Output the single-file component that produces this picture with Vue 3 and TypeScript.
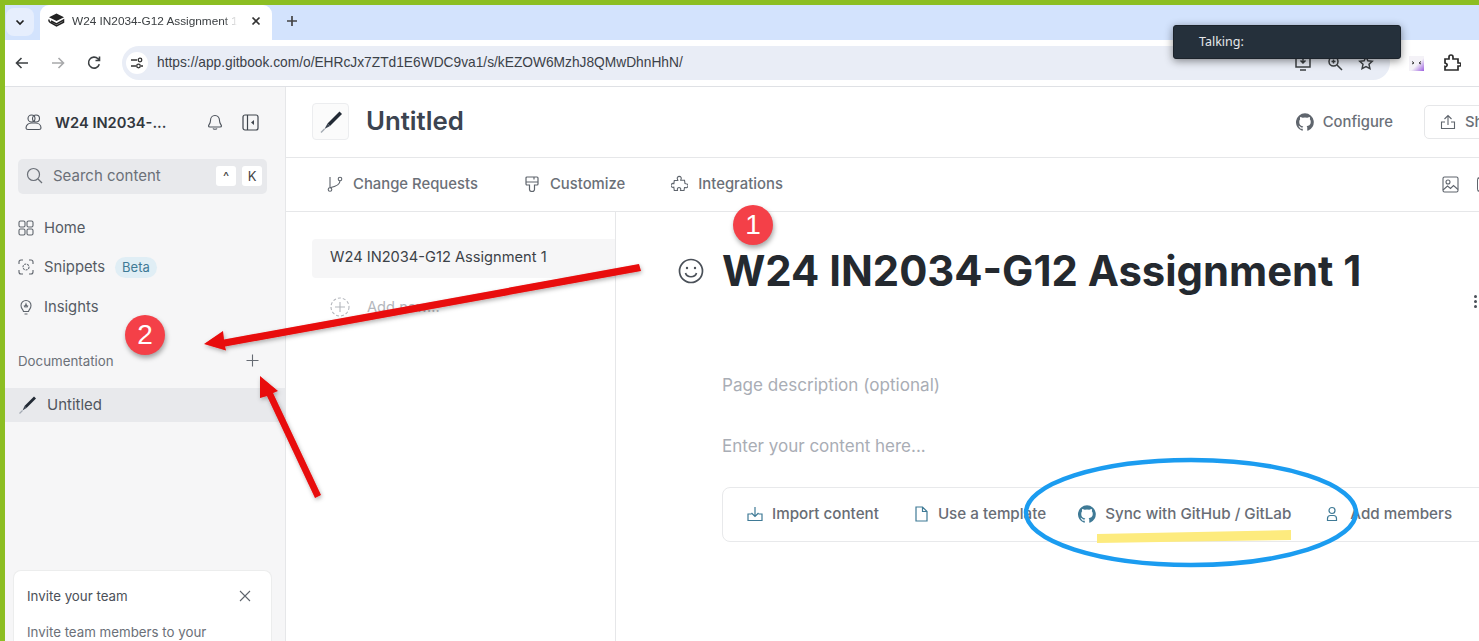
<script setup lang="ts">
const navItems = [
  { label: "Home", icon: "home" },
  { label: "Snippets", icon: "snippets", badge: "Beta" },
  { label: "Insights", icon: "insights" },
];
const tabs = [
  { label: "Change Requests", icon: "branch" },
  { label: "Customize", icon: "brush" },
  { label: "Integrations", icon: "puzzle" },
];
const githubPath =
  "M8 .2a8 8 0 0 0-2.500 15.600c.4.100.5-.2.5-.4v-1.400c-2.200.5-2.700-1-2.700-1-.4-.9-.9-1.200-.9-1.200-.7-.5.1-.5.1-.5.8.1 1.200.8 1.200.8.7 1.200 1.900.9 2.300.7.1-.5.3-.9.5-1.100-1.800-.2-3.600-.9-3.600-4 0-.9.3-1.600.8-2.100-.1-.2-.4-1 .1-2.100 0 0 .7-.2 2.200.8a7.600 7.600 0 0 1 4 0c1.500-1 2.200-.8 2.200-.8.4 1.100.2 1.900.1 2.100.5.6.8 1.300.8 2.100 0 3.100-1.900 3.700-3.700 3.900.3.300.6.700.6 1.500v2.200c0 .2.100.5.600.4A8 8 0 0 0 8 .2z";
</script>

<template>
  <div class="page">
    <header class="tabstrip">
      <div class="tab-menu">
        <svg width="12" height="12" viewBox="0 0 12 12"><path d="M2.500 4.500 6 8l3.500-3.500" fill="none" stroke="#1f1f1f" stroke-width="1.700" /></svg>
      </div>
      <div class="tab">
        <svg width="17" height="15" viewBox="0 0 17 15" class="favicon">
          <path d="M8.500 .5 16 4.300 8.500 8.100 1 4.300z" fill="#222" />
          <path d="M1.200 6.500c-.6 1.500 0 2.300 1 2.900l6.300 3.600 7-3.800V7L8.500 10.800 3 8" fill="none" stroke="#222" stroke-width="1.500" />
        </svg>
        <span class="tab-title">W24 IN2034-G12 Assignment 1</span>
        <svg width="10" height="10" viewBox="0 0 10 10"><path d="M1.500 1.500l7 7m0-7l-7 7" stroke="#333" stroke-width="1.700" /></svg>
      </div>
      <svg class="tab-plus" width="14" height="14" viewBox="0 0 14 14"><path d="M7 2v10M2 7h10" stroke="#444" stroke-width="1.700" /></svg>
    </header>

    <div class="toolbar">
      <svg class="tool" width="16" height="16" viewBox="0 0 16 16"><path d="M14 8H3M7.500 3 2.500 8l5 5" fill="none" stroke="#3c4043" stroke-width="1.600" /></svg>
      <svg class="tool" width="16" height="16" viewBox="0 0 16 16"><path d="M2 8h11M8.500 3l5 5-5 5" fill="none" stroke="#a8a9ab" stroke-width="1.600" /></svg>
      <svg class="tool" width="16" height="16" viewBox="0 0 16 16"><path d="M13.300 9.300A5.500 5.500 0 1 1 12 3.800L13.500 5.500M13.500 1.500v4h-4" fill="none" stroke="#3c4043" stroke-width="1.600" /></svg>
      <div class="urlbar">
        <span class="site-btn">
          <svg width="14" height="14" viewBox="0 0 14 14"><path d="M1 4h6M11 10h2M1 10h5" stroke="#333" stroke-width="1.400" /><circle cx="10" cy="4" r="1.800" fill="none" stroke="#333" stroke-width="1.300" /><circle cx="8.500" cy="10" r="1.800" fill="none" stroke="#333" stroke-width="1.300" /></svg>
        </span>
        <span class="url">https://app.gitbook.com/o/EHRcJx7ZTd1E6WDC9va1/s/kEZOW6MzhJ8QMwDhnHhN/</span>
        <span class="url-icons">
          <svg width="18" height="18" viewBox="0 0 18 18"><path d="M4 3H2v10h14V3h-3M6 16h6M9 2v7M6.500 6.500 9 9l2.500-2.500" fill="none" stroke="#3c4043" stroke-width="1.500" /></svg>
          <svg width="16" height="16" viewBox="0 0 16 16"><circle cx="6.500" cy="6.500" r="4.500" fill="none" stroke="#3c4043" stroke-width="1.500" /><path d="M10 10l5 5M4.500 6.500h4M6.500 4.500v4" stroke="#3c4043" stroke-width="1.500" /></svg>
          <svg width="16" height="16" viewBox="0 0 16 16"><path d="M8 1.800l1.900 4 4.300.5-3.200 3 .9 4.300L8 11.500l-3.900 2.100.9-4.300-3.200-3 4.300-.5z" fill="none" stroke="#3c4043" stroke-width="1.500" /></svg>
        </span>
      </div>
      <div class="ext-icons">
        <span class="ext-avatar">
          <svg width="15" height="15" viewBox="0 0 15 15"><path d="M3 5.500l2 1.500-2 1M12 5.500 10 7l2 1" fill="none" stroke="#333" stroke-width="1" /></svg>
        </span>
        <svg class="tool" width="18" height="18" viewBox="0 0 18 18"><path d="M2 5h4V3a2 2 0 0 1 4 0v2h5v4h1.500a1.500 1.500 0 0 1 0 3H15v4H2v-3.500a1.500 1.500 0 0 0 1-3 1.500 1.500 0 0 0-1-.5z" fill="none" stroke="#2b2b2b" stroke-width="1.700" /></svg>
        <span class="ext-edge"></span>
      </div>
    </div>

    <div class="app">
      <aside class="sidebar">
        <div class="org">
          <svg width="17" height="17" viewBox="0 0 17 17" fill="none" stroke="#4d535c" stroke-width="1.100">
            <circle cx="6.500" cy="4.500" r="3.500" /><circle cx="11" cy="4.500" r="3.500" />
            <path d="M1 14c0-3 2.500-5 5.500-5h4c3 0 5.500 2 5.500 5 0 1-1 1.500-2 1.500H3c-1 0-2-.5-2-1.500z" />
          </svg>
          <span class="org-name">W24 IN2034-...</span>
          <svg class="bell" width="16" height="17" viewBox="0 0 16 17" fill="none" stroke="#4d535c" stroke-width="1.100"><path d="M8 1.500c-3 0-4.500 2.300-4.500 5 0 3-2 4.500-2 5.500 0 .8.500 1 1.500 1h10c1 0 1.500-.2 1.500-1 0-1-2-2.500-2-5.500 0-2.700-1.500-5-4.500-5zM6 14.500c.4 1 3.600 1 4 0" /></svg>
          <svg width="17" height="17" viewBox="0 0 17 17" fill="none" stroke="#3f454d" stroke-width="1.200"><rect x="1" y="1" width="15" height="15" rx="2" /><path d="M5.500 1v15" /><path d="M12 6v5L9 8.500z" fill="#3f454d" stroke="none" /></svg>
        </div>

        <div class="search">
          <svg class="lift" width="17" height="17" viewBox="0 0 17 17" fill="none" stroke="#6b7078" stroke-width="1.200"><circle cx="7.500" cy="7.500" r="6" /><path d="M12 12l4 4" /></svg>
          <span class="search-text">Search content</span>
          <kbd class="key">^</kbd>
          <kbd class="key">K</kbd>
        </div>

        <nav class="nav">
          <div v-for="item in navItems" :key="item.label" class="nav-item">
            <svg v-if="item.icon === 'home'" width="16" height="16" viewBox="0 0 16 16" fill="none" stroke="#5f656d" stroke-width="1.100"><rect x="1" y="1" width="6" height="6" rx="1.500" /><rect x="9" y="1" width="6" height="6" rx="1.500" /><rect x="1" y="9" width="6" height="6" rx="1.500" /><rect x="9" y="9" width="6" height="6" rx="1.500" /></svg>
            <svg v-else-if="item.icon === 'snippets'" width="16" height="16" viewBox="0 0 16 16" fill="none" stroke="#5f656d" stroke-width="1.100"><path d="M1 5V3a2 2 0 0 1 2-2h2M11 1h2a2 2 0 0 1 2 2v2M15 11v2a2 2 0 0 1-2 2h-2M5 15H3a2 2 0 0 1-2-2v-2" /><circle cx="8" cy="8" r="3" stroke-dasharray="2 1" /></svg>
            <svg v-else width="16" height="16" viewBox="0 0 16 16" fill="none" stroke="#5f656d" stroke-width="1.100"><path d="M5.500 12.500C5 10.500 3 9.500 3 6.500a5 5 0 0 1 10 0c0 3-2 4-2.500 6zM6.500 15h3M6 6.500l1 1.500 1-3 1 3 1-1.500" /></svg>
            <span>{{ item.label }}</span>
            <span v-if="item.badge" class="badge">{{ item.badge }}</span>
          </div>
        </nav>

        <div class="section-head">
          <span>Documentation</span>
          <svg width="13" height="13" viewBox="0 0 13 13"><path d="M6.500.5v12M.5 6.500h12" stroke="#666b73" stroke-width="1.100" /></svg>
        </div>
        <div class="space-row">
          <svg width="19" height="19" viewBox="0 0 19 19"><path d="M16 1.500 6.500 11l2 2L18 3.500z" fill="#222a35" /><path d="M6.500 11l-2 4.500 4-2.500z" fill="#3a4350" /><path d="M4.500 15.500l-3 3" stroke="#a4abb3" stroke-width="1.200" /></svg>
          <span>Untitled</span>
        </div>

        <div class="invite">
          <div class="invite-head">
            <span>Invite your team</span>
            <svg width="12" height="12" viewBox="0 0 12 12"><path d="M1 1l10 10m0-10L1 11" stroke="#5f656d" stroke-width="1.100" /></svg>
          </div>
          <p>Invite team members to your</p>
        </div>
      </aside>

      <main class="main">
        <div class="title-bar">
          <span class="space-icon">
            <svg width="24" height="24" viewBox="0 0 24 24"><path d="M20.500 1.500 8.500 13.500l2.500 2.500L23 4z" fill="#222a35" /><path d="M8.500 13.500l-3 5.500 5.500-3z" fill="#3a4350" /><path d="M5.500 19l-3.500 3.500" stroke="#a4abb3" stroke-width="1.400" /></svg>
          </span>
          <h1>Untitled</h1>
          <div class="configure">
            <svg width="18" height="18" viewBox="0 0 16 16"><path :d="githubPath" fill="#5f656d" /></svg>
            <span>Configure</span>
          </div>
          <div class="share">
            <svg width="16" height="16" viewBox="0 0 16 16" fill="none" stroke="#5f656d" stroke-width="1.100"><path d="M8 11V1.500M4.500 5 8 1.500 11.500 5M5 8H1.500v6.500h13V8H11" /></svg>
            <span>Share</span>
          </div>
        </div>

        <div class="tab-bar">
          <div v-for="t in tabs" :key="t.label" class="page-tab">
            <svg v-if="t.icon === 'branch'" width="16" height="16" viewBox="0 0 16 16" fill="none" stroke="#5f656d" stroke-width="1.100"><circle cx="3" cy="13.500" r="1.800" /><circle cx="13" cy="3" r="1.800" /><path d="M3 11.700V1M13 4.800c0 4.500-5 6-10 6.900" /></svg>
            <svg v-else-if="t.icon === 'brush'" width="16" height="16" viewBox="0 0 16 16" fill="none" stroke="#5f656d" stroke-width="1.200"><path d="M3 1h10a1 1 0 0 1 1 1v6a1 1 0 0 1-1 1h-2.500v4.500a2.500 2 0 0 1-5 0V9H3a1 1 0 0 1-1-1V2a1 1 0 0 1 1-1zM2 6h12M10 1v2.500" /></svg>
            <svg v-else width="17" height="17" viewBox="0 0 17 17" fill="none" stroke="#5f656d" stroke-width="1.100"><path d="M6.500 4.300a2 2 0 1 1 3.500 0l-.3 1h3.800l.5 3.200 1 .2a2 2 0 1 1-.8 3.800h-.7l-.5 3H9.500l.2-.9a1.700 1.700 0 1 0-3.300 0l.1.900H3.300l-.5-3.300-.7.200a2 2 0 1 1-.2-4l1 .2.400-3.100h3.500z" /></svg>
            <span>{{ t.label }}</span>
          </div>
          <svg class="image-btn" width="17" height="17" viewBox="0 0 17 17" fill="none" stroke="#5f656d" stroke-width="1.100"><rect x="1" y="1" width="15" height="15" rx="1.500" /><circle cx="6" cy="6" r="2" /><path d="M1 14l4.500-4 3 2.500 3-3 4.500 4" /></svg>
          <span class="edge-icon"></span>
        </div>

        <div class="body">
          <div class="pages">
            <div class="page-row">W24 IN2034-G12 Assignment 1</div>
            <div class="add-row">
              <svg width="20" height="20" viewBox="0 0 20 20" fill="none" stroke="#b4b7bd" stroke-width="1.100"><circle cx="10" cy="10" r="9" stroke-dasharray="3 2" /><path d="M10 5v10M5 10h10" /></svg>
              <span>Add new...</span>
            </div>
          </div>

          <div class="editor">
            <div class="doc-title">
              <svg width="26" height="26" viewBox="0 0 26 26" fill="none" stroke="#4a5058" stroke-width="1.700"><circle cx="13" cy="13" r="11.500" /><path d="M7.500 15c1.500 5 9.500 5 11 0" /><circle cx="9" cy="10" r="1.200" fill="#4a5058" stroke="none" /><circle cx="17" cy="10" r="1.200" fill="#4a5058" stroke="none" /></svg>
              <h2>W24 IN2034-G12 Assignment 1</h2>
            </div>
            <div class="doc-desc">Page description (optional)</div>
            <div class="doc-enter">Enter your content here...</div>
            <div class="actions">
              <div class="action">
                <svg width="16" height="16" viewBox="0 0 16 16" fill="none" stroke="#3f7a96" stroke-width="1.200"><path d="M8 1v9.500M4.500 7 8 10.500 11.500 7M4.500 8H1v6.500h14V8h-3.500" /></svg>
                <span>Import content</span>
              </div>
              <div class="action">
                <svg width="16" height="16" viewBox="0 0 16 16" fill="none" stroke="#3f7a96" stroke-width="1.200"><path d="M3 1h6.500L14 5.500V15H3zM9.500 1v4.500H14" /></svg>
                <span>Use a template</span>
              </div>
              <div class="action">
                <svg width="18" height="18" viewBox="0 0 16 16"><path :d="githubPath" fill="#3f7a96" /></svg>
                <span>Sync with GitHub / GitLab</span>
              </div>
              <div class="action">
                <svg width="16" height="16" viewBox="0 0 16 16" fill="none" stroke="#3f7a96" stroke-width="1.200"><circle cx="8" cy="4.500" r="3" /><path d="M3.500 14.500v-2c0-2 1.500-3 3-3h3c1.500 0 3 1 3 3v2z" /></svg>
                <span class="after-person">Add members</span>
              </div>
            </div>
          </div>
          <div class="more-dots"><i></i><i></i><i></i></div>
        </div>
      </main>
    </div>

    <svg class="markup" width="1479" height="641" viewBox="0 0 1479 641">
      <defs>
        <filter id="soft" x="-20%" y="-20%" width="140%" height="140%">
          <feDropShadow dx="1" dy="2" stdDeviation="2" flood-color="#000" flood-opacity="0.3" />
        </filter>
      </defs>
      <polygon points="1097,534 1291,530 1291,540 1097,543" fill="#fdeb7e" />
      <ellipse cx="1191" cy="512.500" rx="165" ry="52.500" fill="none" stroke="#1b9cf0" stroke-width="4.500" />
      <g filter="url(#soft)" fill="#e80808">
        <polygon points="639,264 641,271 225,346.500 226,350.500 204,344 223,331 224,339.500" />
        <polygon points="321,495 315,498 267,396 260,398 260,376 278,391 273,393" />
      </g>
    </svg>

    <div class="marker marker-one">1</div>
    <div class="marker marker-two">2</div>
    <div class="talking">Talking:</div>
  </div>
</template>

<style>
html,
body {
  margin: 0;
  overflow: hidden;
  background: #fff;
}
</style>

<style scoped>
.page {
  position: relative;
  width: 1479px;
  height: 641px;
  box-sizing: border-box;
  padding: 5px 0 0 5px;
  background: #8cbe22;
  overflow: hidden;
  display: flex;
  flex-direction: column;
  font-family: Inter, "Noto Sans", sans-serif;
  color: #555b64;
}
.tabstrip {
  height: 35px;
  flex: none;
  background: #d3e3fd;
  display: flex;
  align-items: center;
}
.tab-menu {
  width: 28px;
  height: 28px;
  margin: -2px 0 0 1px;
  background: #e6eefd;
  border-radius: 8px;
  display: flex;
  align-items: center;
  justify-content: center;
}
.tab {
  width: 232px;
  height: 35px;
  margin-left: 6px;
  box-sizing: border-box;
  padding: 0 11px 4px 8px;
  background: #fff;
  border-radius: 9px 9px 0 0;
  display: flex;
  align-items: center;
  font-family: "Liberation Sans", Arial, sans-serif;
  font-size: 11.800px;
  color: #3c4043;
}
.favicon {
  flex: none;
}
.tab-title {
  width: 165px;
  margin: 0 14px 0 7px;
  white-space: nowrap;
  overflow: hidden;
  -webkit-mask-image: linear-gradient(to right, #000 92%, transparent);
  mask-image: linear-gradient(to right, #000 92%, transparent);
}
.tab-plus {
  margin: -4px 0 0 13px;
}
.toolbar {
  height: 47px;
  flex: none;
  box-sizing: border-box;
  background: #fff;
  border-bottom: 1px solid #dfe1e5;
  display: flex;
  align-items: center;
  gap: 20px;
  padding-left: 9px;
}
.tool {
  flex: none;
}
.urlbar {
  width: 1268px;
  height: 34px;
  margin-top: -1px;
  background: #e9edf6;
  border-radius: 17px;
  display: flex;
  align-items: center;
  flex: none;
  margin-right: -2px;
}
.site-btn {
  width: 22px;
  height: 22px;
  margin-left: 4px;
  border-radius: 50%;
  background: #fff;
  display: flex;
  align-items: center;
  justify-content: center;
}
.url {
  margin-left: 9px;
  font-family: "Liberation Sans", Arial, sans-serif;
  font-size: 13.750px;
  color: #3b4148;
}
.url-icons {
  margin-left: auto;
  margin-right: 16px;
  display: flex;
  align-items: center;
  gap: 15px;
}
.ext-icons {
  display: flex;
  align-items: center;
  gap: 19px;
  margin-left: 1px;
  flex: 1;
  min-width: 0;
}
.ext-avatar {
  width: 15px;
  height: 15px;
  flex: none;
  background: linear-gradient(135deg, #f4f2f7 55%, #9b5de0);
  display: flex;
}
.ext-edge {
  width: 2px;
  height: 16px;
  margin-left: auto;
  flex: none;
  background: #c5d5f5;
}
.app {
  flex: 1;
  display: flex;
  min-height: 0;
  background: #fff;
}
.sidebar {
  width: 281px;
  flex: none;
  box-sizing: border-box;
  background: #f6f6f7;
  border-right: 1px solid #e6e7e9;
  display: flex;
  flex-direction: column;
}
.org {
  display: flex;
  align-items: center;
  height: 17px;
  margin-top: 27px;
  padding: 0 0 0 20px;
}
.org-name {
  width: 151px;
  margin-left: 13px;
  font-size: 14.700px;
  font-weight: 600;
  color: #32373e;
  white-space: nowrap;
}
.bell {
  margin: 0 19px 0 1px;
}
.search {
  height: 35px;
  margin: 28px 18px 0 13px;
  padding: 0 5px 0 8px;
  background: #e8e9ec;
  border-radius: 5px;
  display: flex;
  align-items: center;
}
.lift {
  margin-top: -3px;
}
.search-text {
  margin: -3px 0 0 10px;
  flex: 1;
  font-size: 15px;
  color: #6b7078;
}
.key {
  width: 20px;
  height: 20px;
  margin-left: 6px;
  margin-top: -1px;
  background: #fff;
  border-radius: 3px;
  display: flex;
  align-items: center;
  justify-content: center;
  font-family: Inter, sans-serif;
  font-size: 13px;
  color: #444;
}
.nav {
  margin-top: 14px;
  padding-left: 13px;
  display: flex;
  flex-direction: column;
}
.nav-item {
  height: 39.500px;
  display: flex;
  align-items: center;
  gap: 10px;
  font-size: 14.800px;
  color: #555b64;
}
.badge {
  padding: 0 7px;
  height: 21px;
  line-height: 21px;
  border-radius: 11px;
  background: #e0eef5;
  color: #3f7a96;
  font-size: 13px;
}
.section-head {
  display: flex;
  align-items: center;
  justify-content: space-between;
  margin-top: 23px;
  padding: 0 26px 0 13px;
  height: 22px;
  font-size: 13.300px;
  color: #6b7078;
}
.space-row {
  height: 34px;
  margin-top: 16px;
  padding-left: 13px;
  background: #e8e9ec;
  display: flex;
  align-items: center;
  gap: 10px;
  font-size: 15px;
  color: #50565e;
}
.invite {
  margin: auto 13px 0 8px;
  height: 71px;
  flex: none;
  box-sizing: border-box;
  padding: 17px 14px 0 13px;
  background: #fff;
  border: 1px solid #eceded;
  border-bottom: none;
  border-radius: 8px 8px 0 0;
  overflow: hidden;
  font-size: 13.300px;
  color: #4b5058;
}
.invite-head {
  display: flex;
  align-items: center;
  justify-content: space-between;
  padding-right: 6px;
}
.invite p {
  margin: 20px 0 0;
  color: #6b7078;
  white-space: nowrap;
}
.main {
  flex: 1;
  min-width: 0;
  display: flex;
  flex-direction: column;
}
.title-bar {
  height: 71px;
  flex: none;
  box-sizing: border-box;
  border-bottom: 1px solid #e6e7e9;
  display: flex;
  align-items: center;
  padding-left: 26px;
  white-space: nowrap;
}
.space-icon {
  width: 35px;
  height: 35px;
  background: #fbfbfb;
  border: 1px solid #ecedef;
  border-radius: 4px;
  display: flex;
  align-items: center;
  justify-content: center;
  flex: none;
  margin-top: -1px;
}
h1 {
  margin: -3px 0 0 17px;
  font-size: 25.800px;
  font-weight: 600;
  color: #3c4450;
}
.configure {
  margin-left: auto;
  display: flex;
  align-items: center;
  gap: 9px;
  font-size: 14.800px;
  font-weight: 500;
  color: #6b7078;
}
.share {
  width: 92px;
  height: 34px;
  box-sizing: border-box;
  flex: none;
  margin: 0 -37px 0 31px;
  padding-left: 15px;
  border: 1px solid #e6e7e9;
  border-radius: 5px;
  display: flex;
  align-items: center;
  gap: 9px;
  font-size: 14.800px;
  font-weight: 500;
  color: #6b7078;
}
.tab-bar {
  height: 54px;
  flex: none;
  box-sizing: border-box;
  border-bottom: 1px solid #e6e7e9;
  display: flex;
  align-items: center;
  padding-left: 41px;
  gap: 46px;
}
.page-tab {
  display: flex;
  align-items: center;
  gap: 10px;
  margin-top: -2px;
  font-size: 14.850px;
  font-weight: 500;
  color: #6b7078;
}
.image-btn {
  margin-left: auto;
  margin-right: -28px;
  margin-top: -1px;
}
.edge-icon {
  width: 5px;
  height: 15px;
  margin-right: -3px;
  border: 1px solid #5f656d;
  border-right: none;
  border-radius: 3px 0 0 3px;
  box-sizing: border-box;
}
.body {
  flex: 1;
  display: flex;
  position: relative;
  min-height: 0;
}
.pages {
  width: 330px;
  flex: none;
  box-sizing: border-box;
  border-right: 1px solid #e6e7e9;
  padding: 27px 0 0 26px;
}
.page-row {
  height: 39px;
  line-height: 36px;
  padding-left: 18px;
  background: #f6f6f7;
  border-radius: 4px 0 0 4px;
  font-size: 14.650px;
  color: #3c4248;
  white-space: nowrap;
}
.add-row {
  display: flex;
  align-items: center;
  gap: 17px;
  margin: 19px 0 0 18px;
  height: 20px;
  font-size: 14.650px;
  color: #b4b7bd;
}
.editor {
  flex: 1;
  min-width: 0;
  padding: 35px 0 0 62px;
  white-space: nowrap;
}
.doc-title {
  display: flex;
  align-items: center;
  gap: 18px;
}
h2 {
  margin: 0;
  font-size: 41.800px;
  line-height: 48px;
  font-weight: 700;
  color: #24292f;
}
.doc-desc {
  margin: 78px 0 0 44px;
  line-height: 24px;
  font-size: 17.100px;
  color: #a9adb5;
}
.doc-enter {
  margin: 37px 0 0 44px;
  line-height: 24px;
  font-size: 17px;
  color: #a9adb5;
}
.actions {
  margin: 29px -40px 0 44px;
  height: 55px;
  box-sizing: border-box;
  padding: 0 0 2px 24px;
  border: 1px solid #e8e9eb;
  border-radius: 8px;
  display: flex;
  align-items: center;
  gap: 33px;
}
.action {
  display: flex;
  align-items: center;
  gap: 9px;
  font-size: 15.200px;
  font-weight: 500;
  color: #686d75;
}
.action:nth-child(2) {
  margin-left: 1px;
  margin-right: -1px;
}
.after-person {
  margin-left: 1px;
}
.more-dots {
  position: absolute;
  right: 2px;
  top: 83px;
  display: flex;
  flex-direction: column;
  gap: 2px;
}
.more-dots i {
  width: 3px;
  height: 3px;
  border-radius: 50%;
  background: #4a5058;
}
.markup {
  position: absolute;
  left: 0;
  top: 0;
  pointer-events: none;
}
.marker {
  position: absolute;
  width: 40px;
  height: 40px;
  border-radius: 50%;
  background: #f44048;
  box-shadow: 1px 3px 5px rgba(0, 0, 0, 0.35);
  color: #fff;
  font-family: "Liberation Sans", Arial, sans-serif;
  font-size: 28px;
  line-height: 40px;
  text-align: center;
}
.marker-one {
  left: 733px;
  top: 205px;
}
.marker-two {
  left: 125px;
  top: 315px;
}
.talking {
  position: absolute;
  left: 1173px;
  top: 25px;
  width: 228px;
  height: 34px;
  box-sizing: border-box;
  padding-left: 25px;
  background: #25303b;
  border: 1px solid #1c232b;
  border-radius: 3px;
  box-shadow: 0 2px 8px rgba(0, 0, 0, 0.45);
  color: #e6e8ea;
  font-family: "Noto Sans", "Open Sans", sans-serif;
  font-size: 12.500px;
  line-height: 32px;
}
</style>
